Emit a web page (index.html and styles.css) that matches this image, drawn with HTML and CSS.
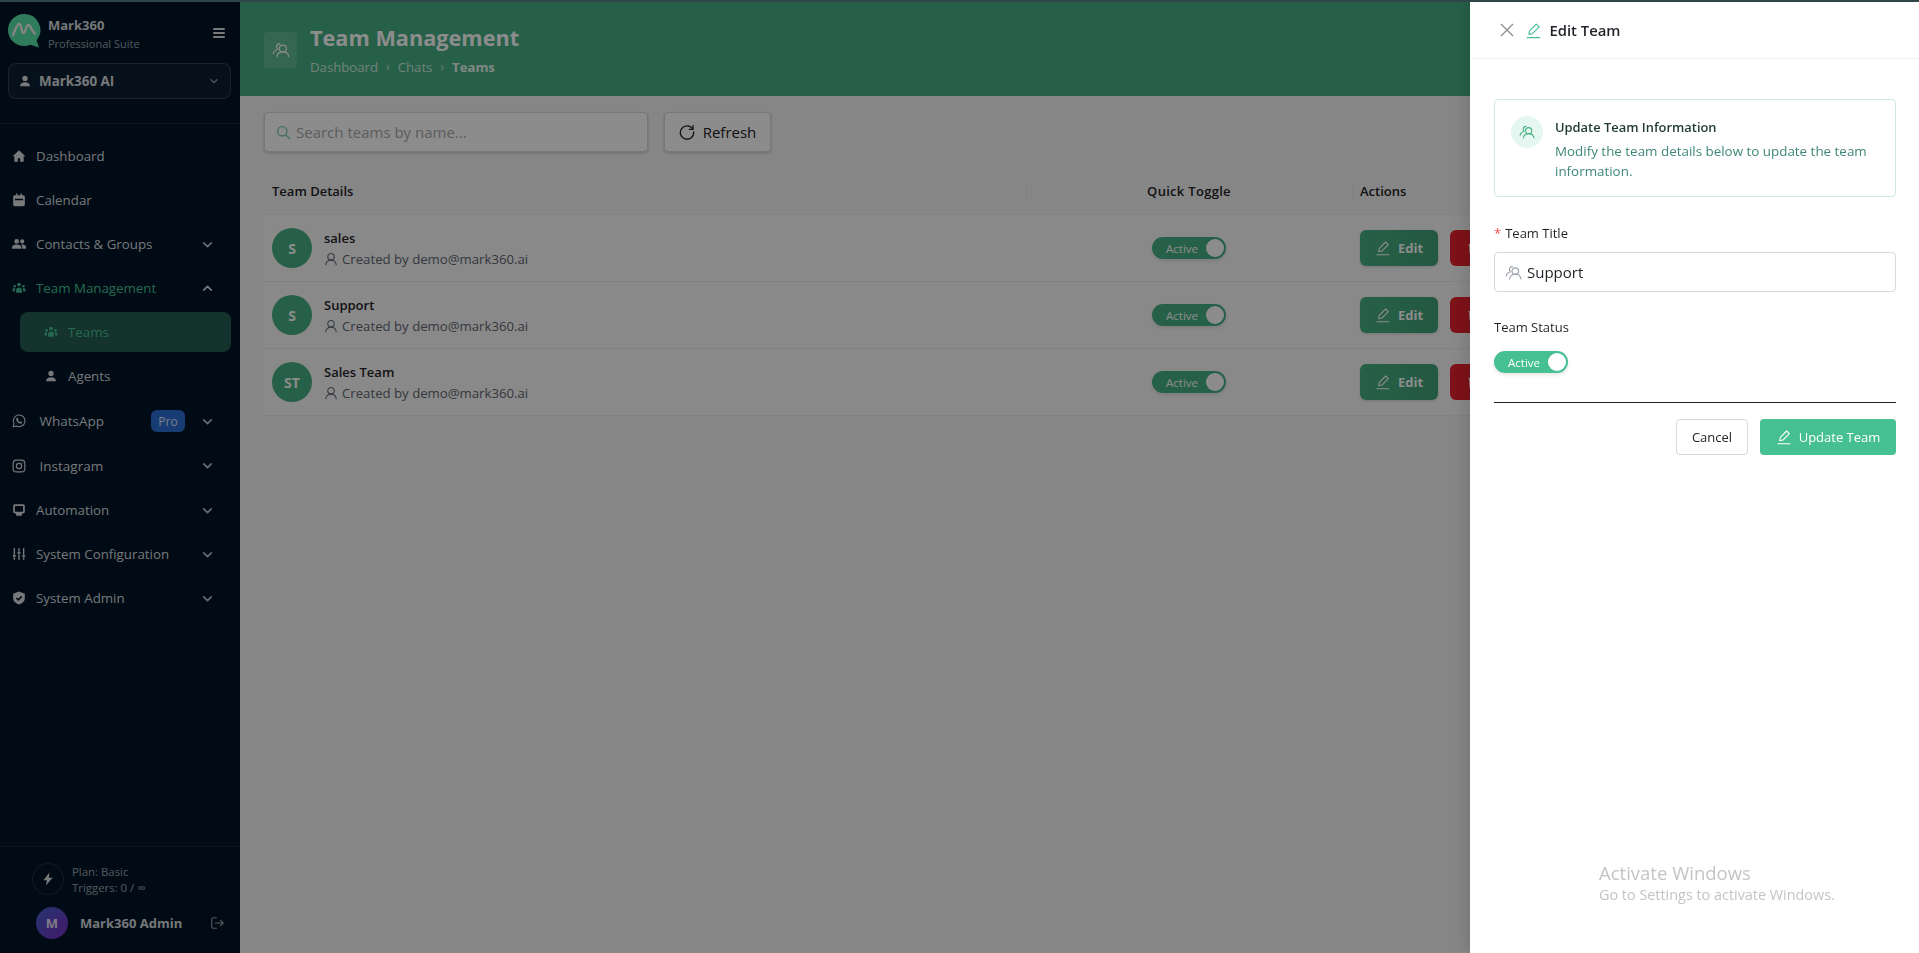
FILE: index.html
```html
<!DOCTYPE html>
<html lang="en">
<head>
<meta charset="utf-8">
<title>Team Management</title>
<link rel="stylesheet" href="styles.css">
</head>
<body>
<svg class="defs" width="0" height="0">
  <symbol id="i-users" viewBox="0 0 24 24" fill="none" stroke="currentColor" stroke-width="1.6" stroke-linecap="round" stroke-linejoin="round">
    <circle cx="14.5" cy="10" r="4.6"/><path d="M6.5 21c.6-4 3.8-6.6 8-6.6s7.400 2.600 8 6.600"/><path d="M10.500 3.600A4.400 4.400 0 0 0 6.300 8c0 1.300.5 2.400 1.400 3.200"/><path d="M1.500 17c.5-2.600 2-4.400 4.500-5.300"/>
  </symbol>
  <symbol id="i-pencil" viewBox="0 0 24 24" fill="none" stroke="currentColor" stroke-width="1.6" stroke-linecap="round" stroke-linejoin="round">
    <path d="M3 22h18"/><path d="M5.500 17.500l1-5L16 3l4 4-9.500 9.500z"/>
  </symbol>
  <symbol id="i-person" viewBox="0 0 24 24" fill="none" stroke="currentColor" stroke-width="1.800" stroke-linecap="round">
    <circle cx="12" cy="8" r="5.500"/><path d="M3 22c.5-5 4-8 9-8s8.500 3 9 8"/>
  </symbol>
  <symbol id="i-chev" viewBox="0 0 24 24" fill="none" stroke="currentColor" stroke-width="3" stroke-linecap="round" stroke-linejoin="round">
    <path d="M5 9l7 7 7-7"/>
  </symbol>
  <symbol id="i-solid-person" viewBox="0 0 24 24" fill="currentColor">
    <circle cx="12" cy="7.500" r="4.500"/><path d="M3.500 21c0-4.500 3.500-7 8.500-7s8.500 2.500 8.500 7z"/>
  </symbol>
  <symbol id="i-group" viewBox="0 0 24 24" fill="currentColor">
    <circle cx="12" cy="6" r="3.200"/><circle cx="4.500" cy="9" r="2.300"/><circle cx="19.500" cy="9" r="2.300"/><path d="M7 20v-4.500c0-3 2-4.500 5-4.500s5 1.500 5 4.500V20z"/><path d="M1 18v-3c0-2 1.500-3.500 4.500-3-.5 1-.5 2-.5 3.500V18zM23 18v-3c0-2-1.500-3.500-4.500-3 .5 1 .5 2 .5 3.500V18z"/>
  </symbol>
</svg>

<div class="app">
  <aside class="sidebar">
    <div class="brand">
      <svg class="logo" viewBox="0 0 33 34">
        <path fill="#58e0a8" d="M16 0a16 16 0 0 0 0 32c2.200 0 4.300-.4 6.200-1.200L31 33.500l-2.400-7.300A16 16 0 0 0 16 0z"/>
        <path fill="none" stroke="#f2f2f2" stroke-width="2.400" stroke-linecap="round" stroke-linejoin="round" d="M5 21C7 16 9 10 11.300 10 14 10 13 19 15.500 19 18 19 17.500 11 20.500 11 23 11 23.500 18 27 19.500"/>
      </svg>
      <div class="brand-text">
        <strong class="brand-name">Mark360</strong>
        <span class="brand-sub">Professional Suite</span>
      </div>
      <svg class="burger" viewBox="0 0 12 10" fill="currentColor"><rect width="12" height="2" rx="1"/><rect y="4" width="12" height="2" rx="1"/><rect y="8" width="12" height="2" rx="1"/></svg>
    </div>
    <div class="org">
      <svg class="ico"><use href="#i-solid-person"/></svg>
      <span class="org-name">Mark360 AI</span>
      <svg class="org-chev"><use href="#i-chev"/></svg>
    </div>
    <nav class="nav">
      <a class="item">
        <svg class="ico" viewBox="0 0 24 24" fill="currentColor"><path d="M12 2L1 12.500h3V22h6v-6h4v6h6v-9.500h3z"/></svg>
        <span class="label">Dashboard</span>
      </a>
      <a class="item">
        <svg class="ico" viewBox="0 0 24 24" fill="currentColor"><path d="M7 1h2.500v3h5V1H17v3h2.500A2.500 2.500 0 0 1 22 6.500V20a2.500 2.500 0 0 1-2.500 2.500h-15A2.500 2.500 0 0 1 2 20V6.500A2.500 2.500 0 0 1 4.500 4H7zM5 10v2.500h14V10z"/></svg>
        <span class="label">Calendar</span>
      </a>
      <a class="item">
        <svg class="ico" viewBox="0 0 24 24" fill="currentColor"><circle cx="8" cy="7.500" r="4"/><circle cx="17.500" cy="7.500" r="3.500"/><path d="M0 20v-2c0-3.500 3.500-5 8-5s8 1.500 8 5v2z"/><path d="M17.500 20v-2.500c0-1.800-.8-3.300-2.200-4.300 1-.2 1.800-.2 2.700-.2 3.500 0 6 1.500 6 4.500V20z"/></svg>
        <span class="label">Contacts &amp; Groups</span>
        <svg class="chev"><use href="#i-chev"/></svg>
      </a>
      <a class="item is-open">
        <svg class="ico"><use href="#i-group"/></svg>
        <span class="label">Team Management</span>
        <svg class="chev up"><use href="#i-chev"/></svg>
      </a>
      <a class="item sub is-active">
        <svg class="ico"><use href="#i-group"/></svg>
        <span class="label">Teams</span>
      </a>
      <a class="item sub">
        <svg class="ico"><use href="#i-solid-person"/></svg>
        <span class="label">Agents</span>
      </a>
      <a class="item wide">
        <svg class="ico-lg" viewBox="0 0 24 24" fill="none" stroke="currentColor" stroke-width="1.800" stroke-linejoin="round"><path d="M2 22l1.500-5.500A10 10 0 1 1 7.500 20.500z"/><path fill="currentColor" stroke="none" d="M8.500 7c.5-.5 1.300-.5 1.500 0l1 2.300-.9 1.300c.7 1.400 1.900 2.500 3.300 3.200l1.300-1 2.300 1c.5.2.5 1 0 1.500-1 1.200-2.700 1.400-4.500.5-2.200-1-4-2.800-5-5-.6-1.500-.2-3 1-4.300z"/></svg>
        <span class="label">WhatsApp</span>
        <span class="pro">Pro</span>
        <svg class="chev"><use href="#i-chev"/></svg>
      </a>
      <a class="item wide">
        <svg class="ico-lg" viewBox="0 0 24 24" fill="none" stroke="currentColor" stroke-width="2"><rect x="2" y="2" width="20" height="20" rx="5.500"/><circle cx="12" cy="12" r="4.500"/><circle cx="17.500" cy="6.500" r="1" fill="currentColor" stroke="none"/></svg>
        <span class="label">Instagram</span>
        <svg class="chev"><use href="#i-chev"/></svg>
      </a>
      <a class="item">
        <svg class="ico" viewBox="0 0 24 24" fill="currentColor"><path fill-rule="evenodd" d="M5 2h14a3 3 0 0 1 3 3v10a3 3 0 0 1-3 3h-2v2.500a1.500 1.500 0 0 1-1.500 1.500h-7A1.500 1.500 0 0 1 7 20.500V18H5a3 3 0 0 1-3-3V5a3 3 0 0 1 3-3zM5 5v10h14V5z"/></svg>
        <span class="label">Automation</span>
        <svg class="chev"><use href="#i-chev"/></svg>
      </a>
      <a class="item">
        <svg class="ico" viewBox="0 0 24 24" fill="none" stroke="currentColor" stroke-width="2.400" stroke-linecap="round"><path d="M4 3v9M4 18v3M12 3v4M12 13v8M20 3v10M20 19v2"/><path stroke-width="3.400" d="M3 15h2M11 10h2M19 16h2"/></svg>
        <span class="label">System Configuration</span>
        <svg class="chev"><use href="#i-chev"/></svg>
      </a>
      <a class="item">
        <svg class="ico" viewBox="0 0 24 24"><path fill="currentColor" d="M12 1l10 3.500v7c0 6-4 10-10 11.500C6 21.500 2 17.500 2 11.500v-7z"/><path fill="none" stroke="#001529" stroke-width="2.600" d="M7.500 12l3.200 3.200 6-6"/></svg>
        <span class="label">System Admin</span>
        <svg class="chev"><use href="#i-chev"/></svg>
      </a>
    </nav>
    <div class="side-foot">
      <div class="plan">
        <span class="bolt"><svg viewBox="0 0 24 24" fill="currentColor"><path d="M14.500 1L4 14h6l-1.500 9L20 10h-6.500z"/></svg></span>
        <div class="plan-text"><span>Plan: Basic</span><span>Triggers: 0 / ∞</span></div>
      </div>
      <div class="user">
        <span class="user-avatar">M</span>
        <strong class="user-name">Mark360 Admin</strong>
        <svg class="logout" viewBox="0 0 24 24" fill="none" stroke="currentColor" stroke-width="2" stroke-linecap="round" stroke-linejoin="round"><path d="M11 3H5a2 2 0 0 0-2 2v14a2 2 0 0 0 2 2h6"/><path d="M9 12h13M18 7.500l4.500 4.500-4.500 4.500"/></svg>
      </div>
    </div>
  </aside>

  <main class="main">
    <header class="page-head">
      <span class="head-icon"><svg><use href="#i-users"/></svg></span>
      <div>
        <h1 class="page-title">Team Management</h1>
        <div class="crumbs"><span>Dashboard</span><i>›</i><span>Chats</span><i>›</i><b>Teams</b></div>
      </div>
    </header>
    <section class="content">
      <div class="toolbar">
        <label class="search">
          <svg viewBox="0 0 24 24" fill="none" stroke="currentColor" stroke-width="2.200" stroke-linecap="round"><circle cx="10" cy="10" r="7.500"/><path d="M15.500 15.500L22 22"/></svg>
          <span>Search teams by name...</span>
        </label>
        <button class="refresh">
          <svg viewBox="0 0 24 24" fill="none" stroke="currentColor" stroke-width="2" stroke-linecap="round"><path d="M20.500 7.500A10 10 0 1 0 22 12"/><path d="M21 2.500v5.500h-5.500" stroke-linejoin="round"/></svg>
          Refresh
        </button>
      </div>
      <div class="table">
        <div class="thead">
          <div class="th">Team Details</div>
          <div class="th center">Quick Toggle</div>
          <div class="th">Actions</div>
        </div>
        <div class="row">
          <div class="team"><span class="avatar">S</span><div><div class="team-name">sales</div><div class="team-by"><svg><use href="#i-person"/></svg>Created by demo@mark360.ai</div></div></div>
          <div class="center"><span class="toggle dim">Active<i></i></span></div>
          <div class="actions"><button class="btn-edit"><svg><use href="#i-pencil"/></svg>Edit</button><button class="btn-del"><svg viewBox="0 0 24 24" fill="none" stroke="currentColor" stroke-width="1.800"><path d="M4 6h16M9 6V3h6v3M6 6l1 15h10l1-15"/></svg>Delete</button></div>
        </div>
        <div class="row">
          <div class="team"><span class="avatar">S</span><div><div class="team-name">Support</div><div class="team-by"><svg><use href="#i-person"/></svg>Created by demo@mark360.ai</div></div></div>
          <div class="center"><span class="toggle dim">Active<i></i></span></div>
          <div class="actions"><button class="btn-edit"><svg><use href="#i-pencil"/></svg>Edit</button><button class="btn-del"><svg viewBox="0 0 24 24" fill="none" stroke="currentColor" stroke-width="1.800"><path d="M4 6h16M9 6V3h6v3M6 6l1 15h10l1-15"/></svg>Delete</button></div>
        </div>
        <div class="row">
          <div class="team"><span class="avatar">ST</span><div><div class="team-name">Sales Team</div><div class="team-by"><svg><use href="#i-person"/></svg>Created by demo@mark360.ai</div></div></div>
          <div class="center"><span class="toggle dim">Active<i></i></span></div>
          <div class="actions"><button class="btn-edit"><svg><use href="#i-pencil"/></svg>Edit</button><button class="btn-del"><svg viewBox="0 0 24 24" fill="none" stroke="currentColor" stroke-width="1.800"><path d="M4 6h16M9 6V3h6v3M6 6l1 15h10l1-15"/></svg>Delete</button></div>
        </div>
      </div>
    </section>
  </main>
</div>

<div class="mask"></div>
<div class="topline"></div>

<aside class="drawer">
  <header class="drawer-head">
    <svg class="close" viewBox="0 0 14 14" fill="none" stroke="currentColor" stroke-width="1.200"><path d="M1 1l12 12M13 1L1 13"/></svg>
    <svg class="head-pencil"><use href="#i-pencil"/></svg>
    <h2 class="drawer-title">Edit Team</h2>
  </header>
  <div class="drawer-body">
    <div class="info">
      <span class="info-icon"><svg><use href="#i-users"/></svg></span>
      <div>
        <div class="info-title">Update Team Information</div>
        <p class="info-text">Modify the team details below to update the team information.</p>
      </div>
    </div>
    <div class="field title-field">
      <label class="field-label"><em>*</em>Team Title</label>
      <div class="input"><svg><use href="#i-users"/></svg><span>Support</span></div>
    </div>
    <div class="field status-field">
      <label class="field-label">Team Status</label>
      <span class="toggle">Active<i></i></span>
    </div>
    <div class="drawer-actions">
      <button class="btn-cancel">Cancel</button>
      <button class="btn-update"><svg><use href="#i-pencil"/></svg>Update Team</button>
    </div>
  </div>
  <div class="watermark">
    <div class="wm-1">Activate Windows</div>
    <div class="wm-2">Go to Settings to activate Windows.</div>
  </div>
</aside>
</body>
</html>
```

FILE: styles.css
```css
* { box-sizing: border-box; }
html, body { margin: 0; height: 100%; overflow: hidden; }
body { font-family: "Open Sans", "Noto Sans", "Liberation Sans", sans-serif; font-size: 14px; color: #1f2328; background: #f5f5f5; }
.defs { position: absolute; }
button { font: inherit; cursor: pointer; }
h1, h2, p { margin: 0; }

.app { display: flex; height: 953px; }

/* sidebar */
.sidebar { width: 240px; flex: none; background: #001529; color: rgba(255,255,255,.85); display: flex; flex-direction: column; }
.brand { display: flex; align-items: flex-start; height: 63px; padding: 14px 15px 0 8px; }
.logo { width: 33px; height: 34px; flex: none; }
.brand-text { display: flex; flex-direction: column; margin: 2px 0 0 7px; flex: 1; }
.brand-name { font-size: 13px; font-weight: 700; line-height: 18px; }
.brand-sub { font-size: 11px; line-height: 19px; color: rgba(255,255,255,.6); }
.burger { width: 12px; height: 10px; margin-top: 14px; }
.org { margin: 0 9px 0 8px; height: 36px; border: 1px solid rgba(255,255,255,.14); border-radius: 8px; background: rgba(255,255,255,.05); display: flex; align-items: center; padding: 0 11px 0 9px; }
.org .ico { width: 14px; height: 14px; }
.org-name { font-size: 13.400px; font-weight: 700; margin-left: 7px; flex: 1; }
.org-chev { width: 10px; height: 10px; color: rgba(255,255,255,.6); }
.nav { margin-top: 24px; padding: 12px 0 0; border-top: 1px solid rgba(255,255,255,.08); flex: 1; }
.ico { width: 14px; height: 14px; flex: none; }
.ico-lg { width: 14px; height: 14px; flex: none; }
.item { display: flex; align-items: center; height: 40px; margin-bottom: 4px; padding: 0 26px 0 12px; font-size: 13.300px; }
.item .label { margin-left: 10px; flex: 1; white-space: nowrap; }
.item.wide { height: 41px; }
.sub + .wide { padding-top: 1px; }
.item.wide .label { margin-left: 13.500px; font-size: 13.500px; }
.chev { width: 13px; height: 13px; color: rgba(255,255,255,.75); }
.chev.up { transform: rotate(180deg); }
.is-open { color: #46c093; }
.is-open .chev { color: rgba(255,255,255,.85); }
.sub { margin-left: 20px; margin-right: 9px; padding-left: 24px; border-radius: 8px; }
.is-active { background: #245d50; color: #46c093; }
.pro { background: #2d6fd6; color: rgba(255,255,255,.85); border-radius: 6px; width: 34px; height: 22px; display: flex; align-items: center; justify-content: center; font-size: 12px; margin-right: 16px; }

.side-foot { border-top: 1px solid rgba(255,255,255,.08); height: 107px; padding: 16px 0 0 32px; }
.plan { display: flex; align-items: flex-start; height: 32px; }
.bolt { width: 32px; height: 32px; border-radius: 50%; border: 1.500px solid rgba(255,255,255,.12); display: flex; align-items: center; justify-content: center; }
.bolt svg { width: 14px; height: 16px; }
.plan-text { display: flex; flex-direction: column; margin: 1px 0 0 8px; font-size: 11.400px; line-height: 16px; color: rgba(255,255,255,.6); }
.user { display: flex; align-items: center; margin: 12px 16px 0 4px; }
.user-avatar { width: 32px; height: 32px; border-radius: 50%; background: linear-gradient(135deg, #4361c8, #7c2cc4); display: flex; align-items: center; justify-content: center; font-size: 13px; font-weight: 700; }
.user-name { margin-left: 12px; font-size: 13px; font-weight: 700; flex: 1; }
.logout { width: 14px; height: 14px; color: rgba(255,255,255,.6); }

/* main */
.main { flex: 1; min-width: 0; display: flex; flex-direction: column; }
.page-head { height: 96px; background: #46b083; color: #fff; display: flex; align-items: center; padding: 3px 24px 0; gap: 13px; }
.head-icon { width: 33px; height: 36px; border-radius: 4px; background: rgba(255,255,255,.15); display: flex; align-items: center; justify-content: center; }
.head-icon svg { width: 18px; height: 18px; }
.page-title { font-size: 21.700px; font-weight: 700; line-height: 32px; }
.crumbs { display: flex; align-items: center; margin-top: 3px; font-size: 13.200px; line-height: 20px; color: rgba(255,255,255,.75); }
.crumbs i { font-style: normal; margin: 0 8px; font-size: 12px; }
.crumbs b { font-weight: 700; color: rgba(255,255,255,.9); }

.content { padding: 16px 24px; flex: 1; min-width: 0; overflow: hidden; }
.toolbar { display: flex; gap: 16px; height: 40px; }
.search { width: 384px; background: #fff; border: 1px solid #d9d9d9; border-radius: 4px; box-shadow: 0 1px 3px rgba(0,0,0,.2); display: flex; align-items: center; padding: 0 11px; gap: 5px; color: #a9a9a9; font-size: 15px; }
.search svg { width: 15px; height: 15px; color: #7cccaf; flex: none; }
.refresh { width: 107px; height: 40px; background: #fff; border: 1px solid #d9d9d9; border-radius: 4px; box-shadow: 0 1px 3px rgba(0,0,0,.2); display: flex; align-items: center; justify-content: center; gap: 8px; color: #222; font-size: 15px; padding: 0; }
.refresh svg { width: 16px; height: 16px; }

.table { margin-top: 16px; }
.thead, .row { display: grid; grid-template-columns: 762px 326px 1fr; align-items: center; }
.thead { height: 47px; border-bottom: 1px solid #ececec; }
.th { font-size: 13px; font-weight: 600; padding-left: 8px; position: relative; }
.th.center { padding-left: 0; letter-spacing: .3px; }
.th + .th::before { content: ""; position: absolute; left: 0; top: 0; height: 22px; width: 1px; background: #ececec; }
.center { text-align: center; }
.row { height: 67px; background: #fafafa; border-bottom: 1px solid #ececec; }
.team { display: flex; align-items: center; padding-left: 8px; gap: 12px; }
.avatar { width: 40px; height: 40px; border-radius: 50%; background: #46b083; color: #fff; font-size: 14px; font-weight: 700; display: flex; align-items: center; justify-content: center; flex: none; }
.team-name { font-size: 13px; font-weight: 600; line-height: 20px; color: #1f2328; }
.team-by { font-size: 13.200px; line-height: 20px; color: #5f6672; display: flex; align-items: center; gap: 4px; margin-top: 1px; }
.team-by svg { width: 14px; height: 14px; }
.toggle { display: inline-flex; align-items: center; justify-content: space-between; width: 74px; height: 22px; border-radius: 11px; background: #46c093; color: #fff; font-size: 11.500px; padding: 0 2px 0 14px; box-shadow: 0 2px 4px rgba(0,0,0,.1); vertical-align: middle; }
.toggle i { width: 18px; height: 18px; background: #fff; border-radius: 50%; }
.toggle.dim { background: #46b083; }
.actions { display: flex; gap: 12px; padding-left: 8px; }
.btn-edit, .btn-del { height: 36px; border: 0; border-radius: 6px; color: #fff; font-size: 13px; font-weight: 700; display: flex; align-items: center; justify-content: center; gap: 7px; flex: none; padding: 0; }
.btn-edit { width: 78px; background: linear-gradient(90deg, #46b083, #41a077); box-shadow: 0 1px 3px rgba(0,0,0,.15); }
.btn-edit svg { width: 16px; height: 16px; }
.btn-del { width: 96px; background: #e6212c; }
.btn-del svg { width: 14px; height: 14px; }

/* overlay */
.mask { position: fixed; inset: 0; background: rgba(0,0,0,.45); }
.topline { position: fixed; left: 0; right: 0; top: 0; height: 2px; background: #2f4648; z-index: 3; }

/* drawer */
.drawer { position: fixed; top: 0; right: 0; bottom: 0; width: 449px; background: #fff; box-shadow: -6px 0 16px rgba(0,0,0,.12); display: flex; flex-direction: column; z-index: 2; }
.drawer-head { height: 59px; flex: none; border-bottom: 1px solid #f0f0f0; display: flex; align-items: center; padding: 2px 24px 0 29.500px; }
.close { width: 14px; height: 14px; color: #8a8a8a; }
.head-pencil { width: 17px; height: 17px; color: #46c093; margin-left: 11px; }
.drawer-title { font-size: 14.800px; font-weight: 600; margin-left: 8px; color: #1f2328; }
.drawer-body { padding: 40px 23px 0 24px; flex: 1; }
.info { height: 98px; border: 1px solid #cfeae0; border-radius: 4px; display: flex; align-items: flex-start; padding: 16px; gap: 12px; }
.info-icon { width: 32px; height: 32px; border-radius: 50%; background: #e6f6f0; color: #46b083; display: flex; align-items: center; justify-content: center; flex: none; }
.info-icon svg { width: 16px; height: 16px; }
.info-title { font-size: 12.900px; font-weight: 600; line-height: 20px; margin-top: 1px; color: #1e3a34; }
.info-text { font-size: 13.400px; line-height: 20px; color: #3f8779; margin-top: 4px; }
.field-label { display: block; font-size: 13px; line-height: 20px; color: #1f2328; }
.field-label em { font-style: normal; color: #ff4d4f; margin-right: 4px; }
.title-field { margin-top: 26px; }
.input { height: 40px; margin-top: 9px; border: 1px solid #d9d9d9; border-radius: 4px; display: flex; align-items: center; padding: 0 10px; gap: 5px; font-size: 15px; color: #1f2328; }
.input svg { width: 17px; height: 17px; color: #9aa0a8; }
.status-field { margin-top: 25px; }
.status-field .toggle { margin-top: 14px; display: flex; }
.drawer-actions { margin-top: 29px; border-top: 1px solid #222; padding-top: 16px; display: flex; justify-content: flex-end; gap: 12px; }
.btn-cancel { width: 72px; height: 36px; background: #fff; border: 1px solid #d9d9d9; border-radius: 4px; font-size: 13px; color: #1f2328; padding: 0; }
.btn-update { width: 136px; height: 36px; background: #46c093; border: 0; border-radius: 4px; color: #fff; font-size: 13px; display: flex; align-items: center; justify-content: center; gap: 7px; padding: 0; }
.btn-update svg { width: 16px; height: 16px; }
.watermark { position: absolute; left: 129px; top: 861px; color: #c4c4c4; white-space: nowrap; }
.wm-1 { font-size: 18.500px; line-height: 24px; }
.wm-2 { font-size: 14.400px; line-height: 20px; }
```
